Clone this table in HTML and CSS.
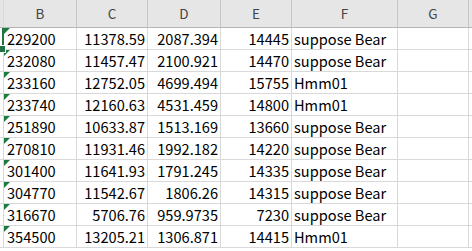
FILE: index.html
```html
<!DOCTYPE html>
<html>
<head>
<meta charset="utf-8">
<link rel="stylesheet" href="styles.css">
</head>
<body>
<div class="sheet">
  <div class="hd a"></div><div class="hd">B</div><div class="hd">C</div><div class="hd">D</div><div class="hd">E</div><div class="hd">F</div><div class="hd">G</div><div class="hd h"></div>

  <div class="c a sel"><span class="handle"></span></div><div class="c t">229200</div><div class="c n">11378.59</div><div class="c n">2087.394</div><div class="c n">14445</div><div class="c s">suppose Bear</div><div class="c"></div><div class="c h"></div>
  <div class="c a"></div><div class="c t">232080</div><div class="c n">11457.47</div><div class="c n">2100.921</div><div class="c n">14470</div><div class="c s">suppose Bear</div><div class="c"></div><div class="c h"></div>
  <div class="c a"></div><div class="c t">233160</div><div class="c n">12752.05</div><div class="c n">4699.494</div><div class="c n">15755</div><div class="c s">Hmm01</div><div class="c"></div><div class="c h"></div>
  <div class="c a"></div><div class="c t">233740</div><div class="c n">12160.63</div><div class="c n">4531.459</div><div class="c n">14800</div><div class="c s">Hmm01</div><div class="c"></div><div class="c h"></div>
  <div class="c a"></div><div class="c t">251890</div><div class="c n">10633.87</div><div class="c n">1513.169</div><div class="c n">13660</div><div class="c s">suppose Bear</div><div class="c"></div><div class="c h"></div>
  <div class="c a"></div><div class="c t">270810</div><div class="c n">11931.46</div><div class="c n">1992.182</div><div class="c n">14220</div><div class="c s">suppose Bear</div><div class="c"></div><div class="c h"></div>
  <div class="c a"></div><div class="c t">301400</div><div class="c n">11641.93</div><div class="c n">1791.245</div><div class="c n">14335</div><div class="c s">suppose Bear</div><div class="c"></div><div class="c h"></div>
  <div class="c a"></div><div class="c t">304770</div><div class="c n">11542.67</div><div class="c n">1806.26</div><div class="c n">14315</div><div class="c s">suppose Bear</div><div class="c"></div><div class="c h"></div>
  <div class="c a"></div><div class="c t">316670</div><div class="c n">5706.76</div><div class="c n">959.9735</div><div class="c n">7230</div><div class="c s">suppose Bear</div><div class="c"></div><div class="c h"></div>
  <div class="c a"></div><div class="c t">354500</div><div class="c n">13205.21</div><div class="c n">1306.871</div><div class="c n">14415</div><div class="c s">Hmm01</div><div class="c"></div><div class="c h"></div>
</div>
</body>
</html>
```
FILE: styles.css
```css
html, body {
  margin: 0;
  padding: 0;
  background: #ffffff;
}
.sheet {
  display: grid;
  grid-template-columns: 4px 73px 71px 73px 71px 106px 71px 1fr;
  grid-template-rows: 28px repeat(10, 22px);
  width: 472px;
  overflow: hidden;
  font-family: "Noto Sans CJK KR", "Noto Sans", sans-serif;
}
.hd {
  box-sizing: border-box;
  background: #e6e6e6;
  border-right: 1px solid #c6c6c6;
  border-bottom: 1px solid #b4b4b4;
  color: #444444;
  font-size: 13.5px;
  display: flex;
  align-items: center;
  justify-content: center;
  padding-bottom: 1px;
}
.c {
  box-sizing: border-box;
  border-right: 1px solid #d9d9d9;
  border-bottom: 1px solid #d9d9d9;
  color: #000000;
  font-size: 14.6px;
  line-height: 21px;
  display: flex;
  align-items: flex-end;
  white-space: nowrap;
  position: relative;
}
.n {
  justify-content: flex-end;
  padding-right: 2px;
}
.t {
  padding-left: 3px;
}
.t::before {
  content: "";
  position: absolute;
  left: 0;
  top: 0;
  width: 0;
  height: 0;
  border-top: 6px solid #1e7b3f;
  border-right: 6px solid transparent;
}
.s {
  padding-left: 2px;
}
.a {
  border-right: 1px solid #d9d9d9;
}
.sel {
  border-right: 2px solid #217346;
  border-bottom: 1px solid #d9d9d9;
  overflow: visible;
  z-index: 2;
}
.handle {
  position: absolute;
  right: -4px;
  bottom: -4px;
  width: 6px;
  height: 6px;
  background: #217346;
  border: 1px solid #ffffff;
  box-sizing: content-box;
}
.h {
  border-right: none;
}
```
